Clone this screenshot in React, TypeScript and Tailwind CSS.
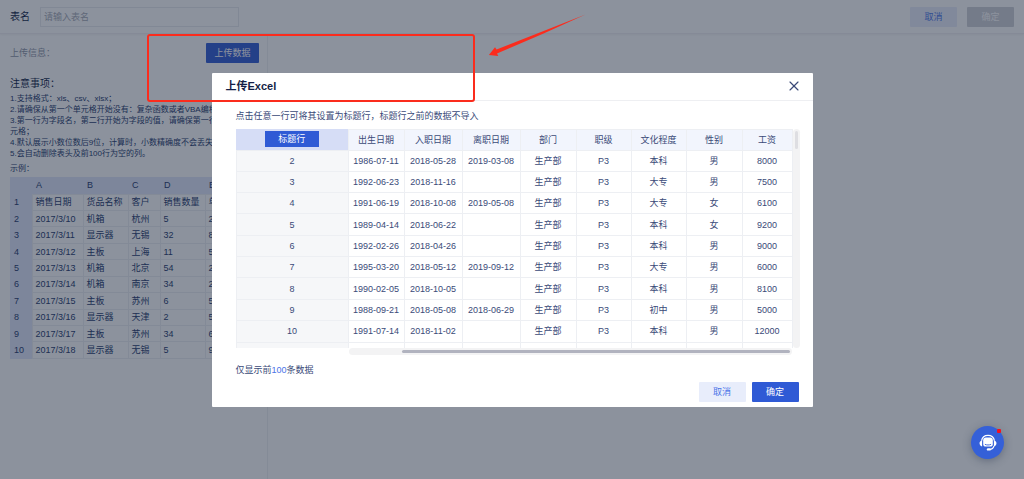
import { X } from 'lucide-react';

const sampleColumns = ['A', 'B', 'C', 'D', 'E'];

const sampleRows = [
  ['销售日期', '货品名称', '客户', '销售数量', '单'],
  ['2017/3/10', '机箱', '杭州', '5', '2'],
  ['2017/3/11', '显示器', '无锡', '32', '8'],
  ['2017/3/12', '主板', '上海', '11', '5'],
  ['2017/3/13', '机箱', '北京', '54', '2'],
  ['2017/3/14', '机箱', '南京', '34', '2'],
  ['2017/3/15', '主板', '苏州', '6', '5'],
  ['2017/3/16', '显示器', '天津', '2', '5'],
  ['2017/3/17', '主板', '苏州', '34', '6'],
  ['2017/3/18', '显示器', '无锡', '5', '9'],
];

const previewColumns = ['出生日期', '入职日期', '离职日期', '部门', '职级', '文化程度', '性别', '工资'];

const previewRows = [
  ['1986-07-11', '2018-05-28', '2019-03-08', '生产部', 'P3', '本科', '男', '8000'],
  ['1992-06-23', '2018-11-16', '', '生产部', 'P3', '大专', '男', '7500'],
  ['1991-06-19', '2018-10-08', '2019-05-08', '生产部', 'P3', '大专', '女', '6100'],
  ['1989-04-14', '2018-06-22', '', '生产部', 'P3', '本科', '女', '9200'],
  ['1992-02-26', '2018-04-26', '', '生产部', 'P3', '本科', '男', '9000'],
  ['1995-03-20', '2018-05-12', '2019-09-12', '生产部', 'P3', '大专', '男', '6000'],
  ['1990-02-05', '2018-10-05', '', '生产部', 'P3', '本科', '男', '8100'],
  ['1988-09-21', '2018-05-08', '2018-06-29', '生产部', 'P3', '初中', '男', '5000'],
  ['1991-07-14', '2018-11-02', '', '生产部', 'P3', '本科', '男', '12000'],
];

export default function App() {
  return (
    <div className="min-h-screen flex flex-col bg-white text-[9px] leading-3 text-[#23376b] font-['Liberation_Sans','Noto_Sans_CJK_SC',sans-serif]">
      <TopBar />
      <UploadPanel />

      {/* --- MODAL --- */}
      <div className="fixed inset-0 flex items-center justify-center bg-[#1a263c]/50">
        <UploadDialog />
      </div>

      <SupportButton />
      <Annotation />
    </div>
  );
}

function TopBar() {
  return (
    <header className="flex items-center justify-between h-[34px] px-[10px] border-b border-[#f0eff3] shadow-xs">
      <div className="flex items-center gap-[10px]">
        <label htmlFor="table-name" className="text-[10px] text-[#0d1b45]">表名</label>
        <input
          id="table-name"
          type="text"
          placeholder="请输入表名"
          className="w-[199px] h-5 px-[3px] border border-[#e9ebef] placeholder:text-[#a5a9b4] outline-none"
        />
      </div>
      <div className="flex gap-[10px]">
        <Button label="取消" variant="light" />
        <Button label="确定" variant="disabled" />
      </div>
    </header>
  );
}

function UploadPanel() {
  return (
    <aside className="flex-1 w-[268px] overflow-hidden border-r border-[#eef0f3] pl-[10px] pr-2 pt-[9px]">
      <div className="flex items-center justify-between">
        <span className="text-[#8d94a6]">上传信息：</span>
        <Button label="上传数据" variant="wide" />
      </div>

      <h2 className="mt-[15px] text-[10px] text-[#0d1b45]">注意事项：</h2>
      <div className="mt-[3px] text-[8px] leading-[11px]">
        <p>1.支持格式：xls、csv、xlsx；</p>
        <p>2.请确保从第一个单元格开始没有：复杂函数或者VBA编程</p>
        <p>3.第一行为字段名，第二行开始为字段的值，请确保第一行没有合并单元格；</p>
        <p>4.默认展示小数位数后9位，计算时，小数精确度不会丢失</p>
        <p>5.会自动删除表头及前100行为空的列。</p>
      </div>

      <p className="mt-1 text-[8px]">示例：</p>
      <table className="mt-[2px] w-full h-[182px] table-fixed border-collapse text-left">
        <colgroup>
          <col className="w-[22px]" />
          <col className="w-[51px]" />
          <col className="w-[45px]" />
          <col className="w-[32px]" />
          <col className="w-[45px]" />
          <col />
        </colgroup>
        <thead>
          <tr className="h-[17px] bg-[#e0e6fa]">
            <th className="p-0" />
            {sampleColumns.map((name) => (
              <th key={name} className="p-0 pl-1 font-normal">{name}</th>
            ))}
          </tr>
        </thead>
        <tbody>
          {sampleRows.map((row, i) => (
            <tr key={i}>
              <th className="p-0 pl-1 font-normal bg-[#e0e6fa]">{i + 1}</th>
              {row.map((cell, j) => (
                <td key={j} className="p-0 pl-[3px] border border-[#eceef2] whitespace-nowrap">{cell}</td>
              ))}
            </tr>
          ))}
        </tbody>
      </table>
    </aside>
  );
}

function UploadDialog() {
  return (
    <section role="dialog" aria-labelledby="dialog-title" className="w-[601px] bg-white rounded-[1px] text-[#3a4a78]">
      <div className="flex items-center justify-between h-7 pl-[14px] pr-[11px] border-b border-[#eeeff2]">
        <h1 id="dialog-title" className="text-[11px] font-bold text-[#141e46]">上传Excel</h1>
        <button type="button" aria-label="关闭">
          <X size={16} strokeWidth={1.75} />
        </button>
      </div>

      <div className="pl-6 pr-[13px] pt-[9px]">
        <p>点击任意一行可将其设置为标题行，标题行之前的数据不导入</p>

        <div className="flex mt-[7px]">
          <div className="flex-1 h-[219px] overflow-hidden">
            <PreviewTable />
          </div>
          <div className="w-[7px] p-[2px] bg-[#f3f3f4] rounded-full">
            <div className="h-[18px] bg-[#dedee2] rounded-full" />
          </div>
        </div>
        <div className="ml-[113px] mr-2 h-[7px] py-[2px] pl-[53px] pr-[2px] bg-[#f3f3f4] rounded-full">
          <div className="h-[3px] bg-[#b1b3bf] rounded-full" />
        </div>

        <p className="mt-[9px]">
          仅显示前<span className="text-[#4a74e8]">100</span>条数据
        </p>
      </div>

      <div className="flex justify-end gap-[6px] pt-[6px] pb-[5px] pr-[14px]">
        <Button label="取消" variant="light" />
        <Button label="确定" variant="primary" />
      </div>
    </section>
  );
}

function PreviewTable() {
  return (
    <table className="w-full h-[235px] table-fixed border-collapse text-center">
      <colgroup>
        <col className="w-[112px]" />
        <col className="w-[56px]" />
        <col className="w-[58px]" />
        <col className="w-[58px]" />
        <col className="w-[56px]" />
        <col className="w-[55px]" />
        <col className="w-[55px]" />
        <col className="w-[56px]" />
        <col />
      </colgroup>
      <thead>
        <tr className="h-[21px] bg-[#f2f5fd]">
          <th className="p-0 bg-[#d6ddf6]">
            <button type="button" className="block mx-auto w-[54px] h-4 bg-[#2f5ad5] text-white font-normal">
              标题行
            </button>
          </th>
          {previewColumns.map((name) => (
            <th key={name} className="p-0 font-normal border border-[#edeff3]">{name}</th>
          ))}
        </tr>
      </thead>
      <tbody>
        {previewRows.map((row, i) => (
          <tr key={i}>
            <th className="p-0 font-normal bg-[#f6f7f9] border border-[#edeff3]">{i + 2}</th>
            {row.map((cell, j) => (
              <td key={j} className="p-0 border border-[#edeff3] whitespace-nowrap">{cell}</td>
            ))}
          </tr>
        ))}
        {/* next row, cut off by the scroll area */}
        <tr className="h-[21px]">
          <th className="p-0 bg-[#f6f7f9] border border-[#edeff3]" />
          {previewColumns.map((name) => (
            <td key={name} className="p-0 border border-[#edeff3]" />
          ))}
        </tr>
      </tbody>
    </table>
  );
}

const buttonStyles = {
  primary: 'w-[47px] bg-[#2f5ad5] text-white',
  wide: 'w-[53px] bg-[#2f5ad5] text-white',
  light: 'w-[47px] bg-[#e8edfb] text-[#4a74e8]',
  disabled: 'w-[47px] bg-[#cfd0d6] text-white',
};

function Button({ label, variant }: { label: string; variant: keyof typeof buttonStyles }) {
  return (
    <button type="button" disabled={variant === 'disabled'} className={`h-5 rounded-[1px] ${buttonStyles[variant]}`}>
      {label}
    </button>
  );
}

function SupportButton() {
  return (
    <button
      type="button"
      aria-label="在线客服"
      className="fixed right-5 bottom-5 flex items-center justify-center size-[33px] rounded-full bg-[#3560d8] shadow-[0_2px_8px_rgba(30,40,70,0.35)]"
    >
      <svg width="18" height="18" viewBox="0 0 18 18" fill="none" stroke="white">
        <path d="M2.6 6.6C3.2 3 5.600 1.400 9 1.400s5.800 1.600 6.400 5.200" strokeWidth="1.2" />
        <rect x="4.2" y="3.6" width="9.6" height="9" rx="2.6" fill="white" stroke="none" />
        <path d="M5.900 10.300c1.600.900 4.600.900 6.200 0" stroke="#3560d8" strokeWidth="0.9" />
        <path d="M3.100 6.200C-.300 6.800-.300 11.800 3.100 12.400zM14.900 6.200c3.400.600 3.400 5.600 0 6.200z" fill="white" stroke="none" />
        <path d="M15 12c-.600 2.300-2.100 3.300-4.500 3.500" strokeWidth="1.100" />
        <rect x="7.800" y="14.200" width="4" height="2.400" rx="1.200" fill="white" stroke="none" />
      </svg>
      <span className="absolute top-[3px] right-[3px] size-1 rounded-[1px] bg-[#f5101e]" />
    </button>
  );
}

/* Red callout drawn on top of the page */
function Annotation() {
  return (
    <div className="pointer-events-none">
      <div className="absolute left-[147px] top-[34px] w-[328px] h-[68px] border-2 border-[#fb2c1d] rounded-[3px]" />
      <svg className="absolute left-[488px] top-[14px]" width="98" height="43" viewBox="0 0 98 43">
        <path d="M97.500.600 8.600 35.600 7 33.200 .9 40.900 10.300 42 9 39.400 55 19.800z" fill="#fb2c1d" />
      </svg>
    </div>
  );
}
